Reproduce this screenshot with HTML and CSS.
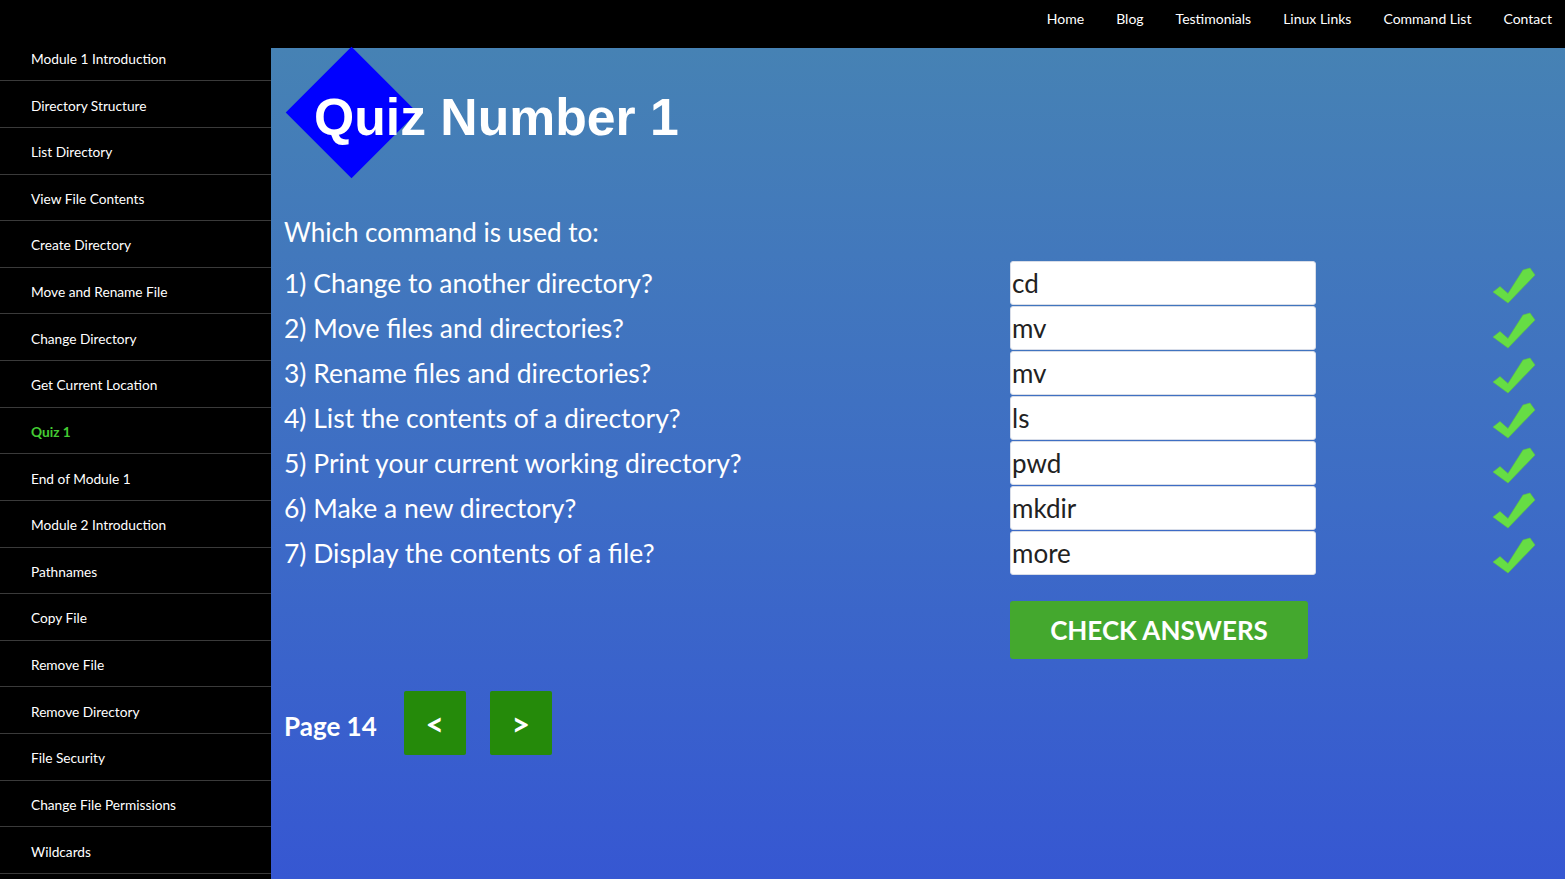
FILE: index.html
```html
<!DOCTYPE html>
<html lang="en">
<head>
<meta charset="utf-8">
<title>Quiz Number 1</title>
<link rel="stylesheet" href="styles.css">
</head>
<body>
<header class="topbar">
  <nav class="topnav">
    <a href="#">Home</a>
    <a href="#">Blog</a>
    <a href="#">Testimonials</a>
    <a href="#">Linux Links</a>
    <a href="#">Command List</a>
    <a href="#">Contact</a>
  </nav>
</header>
<div class="layout">
  <aside class="sidebar">
    <a class="side-item" href="#">Module 1 Introduction</a>
    <a class="side-item" href="#">Directory Structure</a>
    <a class="side-item" href="#">List Directory</a>
    <a class="side-item" href="#">View File Contents</a>
    <a class="side-item" href="#">Create Directory</a>
    <a class="side-item" href="#">Move and Rename File</a>
    <a class="side-item" href="#">Change Directory</a>
    <a class="side-item" href="#">Get Current Location</a>
    <a class="side-item active" href="#">Quiz 1</a>
    <a class="side-item" href="#">End of Module 1</a>
    <a class="side-item" href="#">Module 2 Introduction</a>
    <a class="side-item" href="#">Pathnames</a>
    <a class="side-item" href="#">Copy File</a>
    <a class="side-item" href="#">Remove File</a>
    <a class="side-item" href="#">Remove Directory</a>
    <a class="side-item" href="#">File Security</a>
    <a class="side-item" href="#">Change File Permissions</a>
    <a class="side-item" href="#">Wildcards</a>
  </aside>
  <main class="content">
    <div class="title">
      <div class="diamond"></div>
      <h1>Quiz Number 1</h1>
    </div>
    <p class="intro">Which command is used to:</p>
    <div class="quiz">
      <div class="q">1) Change to another directory?</div>
      <input class="answer" type="text" value="cd">
      <div class="mark"><svg viewBox="0 0 44 44" width="44" height="44"><polygon points="1,31 8,25.5 16,32.5 31,9 38,7 43,14 16,42" /></svg></div>

      <div class="q">2) Move files and directories?</div>
      <input class="answer" type="text" value="mv">
      <div class="mark"><svg viewBox="0 0 44 44" width="44" height="44"><polygon points="1,31 8,25.5 16,32.5 31,9 38,7 43,14 16,42" /></svg></div>

      <div class="q">3) Rename files and directories?</div>
      <input class="answer" type="text" value="mv">
      <div class="mark"><svg viewBox="0 0 44 44" width="44" height="44"><polygon points="1,31 8,25.5 16,32.5 31,9 38,7 43,14 16,42" /></svg></div>

      <div class="q">4) List the contents of a directory?</div>
      <input class="answer" type="text" value="ls">
      <div class="mark"><svg viewBox="0 0 44 44" width="44" height="44"><polygon points="1,31 8,25.5 16,32.5 31,9 38,7 43,14 16,42" /></svg></div>

      <div class="q">5) Print your current working directory?</div>
      <input class="answer" type="text" value="pwd">
      <div class="mark"><svg viewBox="0 0 44 44" width="44" height="44"><polygon points="1,31 8,25.5 16,32.5 31,9 38,7 43,14 16,42" /></svg></div>

      <div class="q">6) Make a new directory?</div>
      <input class="answer" type="text" value="mkdir">
      <div class="mark"><svg viewBox="0 0 44 44" width="44" height="44"><polygon points="1,31 8,25.5 16,32.5 31,9 38,7 43,14 16,42" /></svg></div>

      <div class="q">7) Display the contents of a file?</div>
      <input class="answer" type="text" value="more">
      <div class="mark"><svg viewBox="0 0 44 44" width="44" height="44"><polygon points="1,31 8,25.5 16,32.5 31,9 38,7 43,14 16,42" /></svg></div>

      <button class="check" type="button">CHECK ANSWERS</button>
    </div>
    <div class="pager">
      <span class="page-label">Page 14</span>
      <a class="page-btn prev" href="#">&lt;</a>
      <a class="page-btn next" href="#">&gt;</a>
    </div>
  </main>
</div>
</body>
</html>
```
FILE: styles.css
```css
* { box-sizing: border-box; }
html, body {
  margin: 0;
  padding: 0;
  height: 879px;
  overflow: hidden;
  background: #000;
  font-family: Lato, "Liberation Sans", sans-serif;
}
a { text-decoration: none; }

.topbar {
  height: 48px;
  background: #000;
  display: flex;
  justify-content: flex-end;
  align-items: center;
  padding-right: 13px;
}
.topnav {
  display: flex;
  gap: 32px;
  margin-top: -11px;
}
.topnav a {
  color: #fff;
  font-size: 14px;
}

.layout {
  display: flex;
  height: 831px;
}
.sidebar {
  width: 271px;
  flex: none;
  background: #000;
  display: flex;
  flex-direction: column;
  overflow: hidden;
}
.side-item {
  flex: none;
  height: 46.63px;
  border-bottom: 1px solid #3a3a3a;
  display: flex;
  align-items: center;
  padding-left: 31px;
  padding-top: 2px;
  color: #fff;
  font-size: 13.7px;
}
.side-item:first-child {
  height: 33.3px;
  padding-bottom: 11px;
  padding-top: 0;
}
.side-item.active {
  color: #44cc33;
  font-weight: bold;
}

.content {
  flex: 1;
  background: linear-gradient(to bottom, #4682b4 0%, #3d6cc6 55%, #3657d2 100%);
  padding: 0 14px 0 13px;
}
.title {
  position: relative;
  height: 132px;
}
.diamond {
  position: absolute;
  left: 21px;
  top: -1px;
  width: 93px;
  height: 93px;
  background: #0000ff;
  transform-origin: center;
  transform: translate(0, 19px) rotate(45deg);
}
.title h1 {
  position: relative;
  margin: 0;
  padding-top: 39px;
  padding-left: 30px;
  font-family: "Liberation Sans", Arial, sans-serif;
  font-weight: bold;
  font-size: 51.7px;
  line-height: 60px;
  color: #fff;
}
.intro {
  margin: 37px 0 14px;
  font-size: 26px;
  line-height: 30px;
  color: #fff;
}
.quiz {
  display: grid;
  grid-template-columns: 726px 306px 1fr;
  grid-template-rows: repeat(7, 45px) auto;
}
.q {
  display: flex;
  align-items: center;
  font-size: 26.5px;
  color: #fff;
  height: 44px;
}
.answer {
  height: 44px;
  width: 306px;
  border: 1px solid #d8dde8;
  border-radius: 3px;
  background: #fff;
  font-family: Lato, "Liberation Sans", sans-serif;
  font-size: 26px;
  color: #222;
  padding: 0 0 0 1px;
  margin: 0;
}
.mark {
  display: flex;
  justify-content: flex-end;
  padding-right: 15px;
  height: 44px;
}
.mark svg polygon {
  fill: #66dd44;
  stroke: #5cc63e;
  stroke-width: 0.6;
}
.check {
  grid-column: 2;
  margin-top: 25px;
  width: 298px;
  height: 58px;
  border: none;
  border-radius: 3px;
  background: #44a82e;
  color: #fff;
  font-family: Lato, "Liberation Sans", sans-serif;
  font-size: 26px;
  font-weight: bold;
  padding: 0;
}
.pager {
  display: flex;
  align-items: center;
  margin-top: 32px;
}
.page-label {
  font-size: 26px;
  font-weight: bold;
  color: #fff;
  margin-right: 27px;
  padding-top: 6px;
}
.page-btn {
  width: 62px;
  height: 64px;
  border-radius: 2px;
  background: #258a0a;
  color: #fff;
  font-size: 32px;
  font-weight: bold;
  display: flex;
  align-items: center;
  justify-content: center;
}
.page-btn + .page-btn {
  margin-left: 24px;
}
```
